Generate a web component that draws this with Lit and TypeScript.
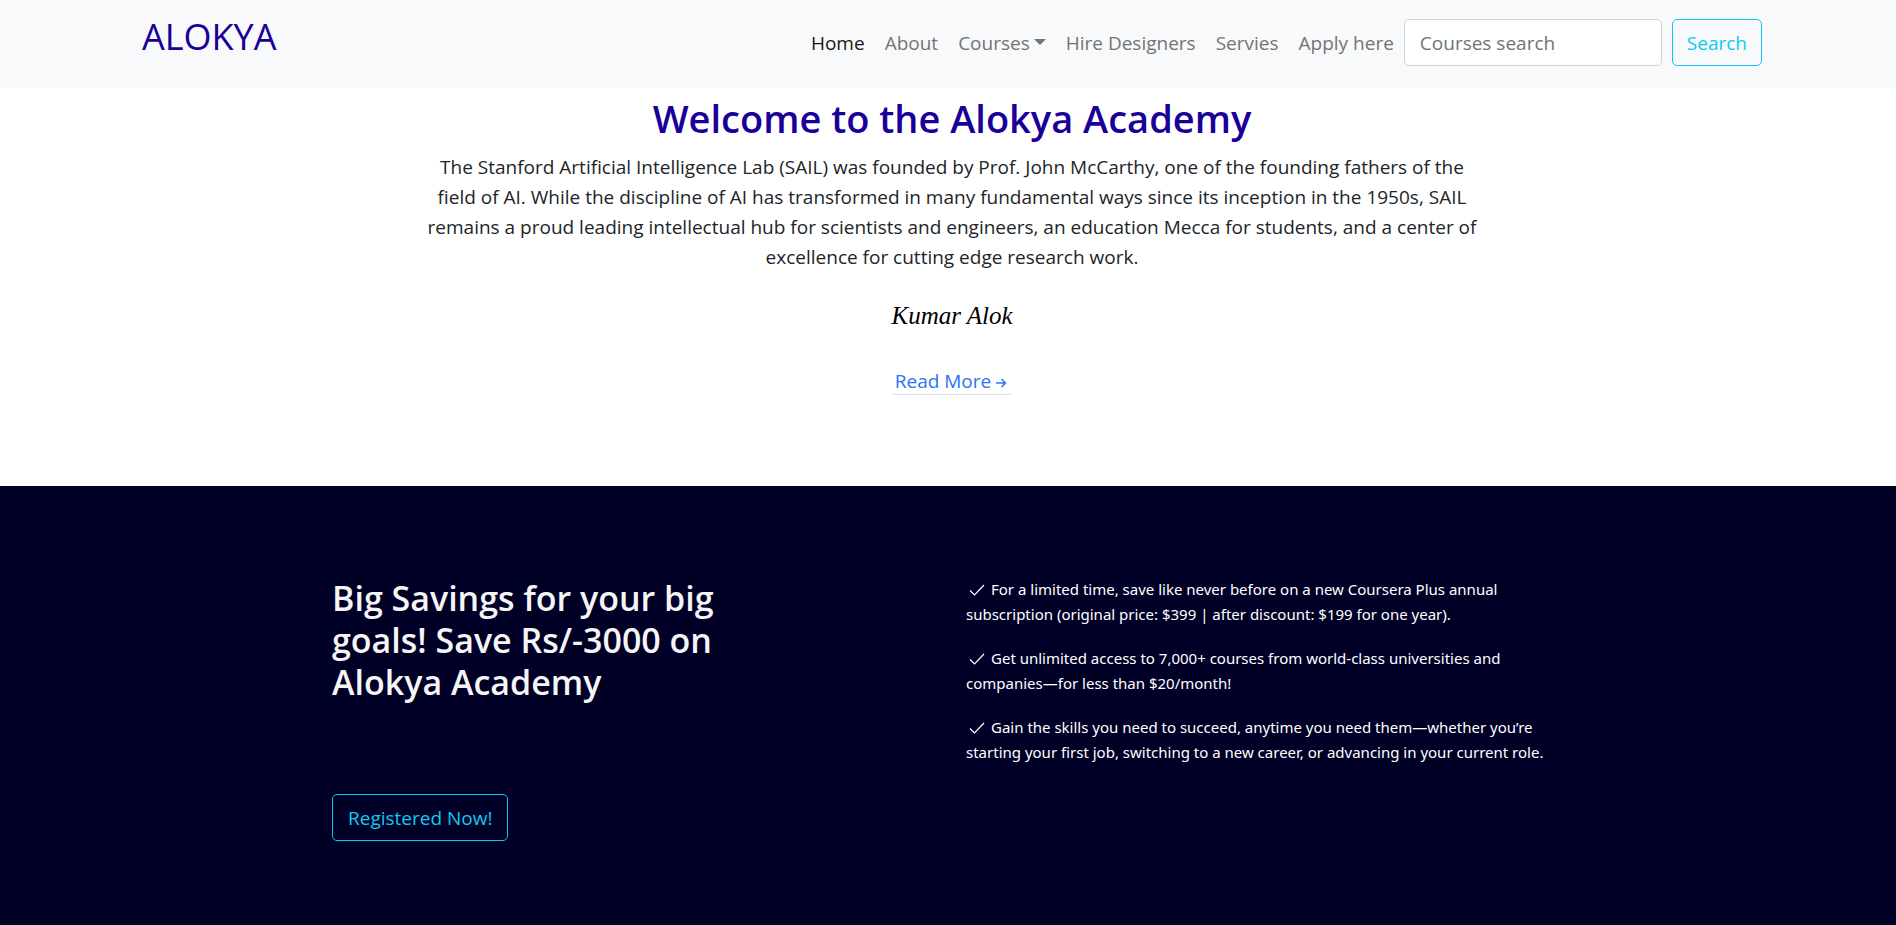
import { LitElement, html, css } from "lit";
import { customElement } from "lit/decorators.js";

const links = ["About", "Courses", "Hire Designers", "Servies", "Apply here"];
const perks = [
  "For a limited time, save like never before on a new Coursera Plus annual subscription (original price: $399 | after discount: $199 for one year).",
  "Get unlimited access to 7,000+ courses from world-class universities and companies—for less than $20/month!",
  "Gain the skills you need to succeed, anytime you need them—whether you’re starting your first job, switching to a new career, or advancing in your current role.",
];

@customElement("app-root")
export class AppRoot extends LitElement {
  static styles = css`
    :host {
      display: flex;
      flex-direction: column;
      min-height: 100vh;
      background: #fff;
      color: #212529;
      font: 400 19px/30px "Open Sans", "Noto Sans", sans-serif;
    }
    * { box-sizing: border-box; }
    a { text-decoration: none; }
    h1, h2, p { margin: 0; }
    .bar {
      display: flex;
      justify-content: space-between;
      align-items: flex-start;
      min-height: 88px;
      padding: 14px 134px 14px 142px;
      background: #f8f9fa;
    }
    .brand { color: #1a0099; font-size: 36px; line-height: 46px; font-weight: 500; }
    .menu { display: flex; align-items: center; padding-top: 5px; }
    .nav { display: flex; }
    .nav a { padding: 0 10px; color: #737475; white-space: nowrap; }
    .nav a.active { color: #17181a; }
    .caret {
      display: inline-block;
      margin-left: 4px;
      vertical-align: 5px;
      border: 6px solid transparent;
      border-top-color: currentColor;
      border-bottom: 0;
    }
    .search { display: flex; gap: 10px; }
    input, button { font: inherit; height: 47px; border-radius: 5px; }
    input {
      width: 258px;
      padding: 0 15px;
      border: 1px solid #ced4da;
      background: #fff;
      color: #212529;
    }
    input::placeholder { color: #6c757d; opacity: 1; }
    button {
      padding: 0 15px;
      border: 1px solid #0dcaf0;
      background: transparent;
      color: #0dcaf0;
      cursor: pointer;
      white-space: nowrap;
    }
    .search button { padding: 0 14px; }
    .intro {
      display: flex;
      flex-direction: column;
      align-items: center;
      padding: 8px 16px 91px 24px;
      text-align: center;
    }
    h1 { color: #1a0099; font-size: 38px; line-height: 44px; font-weight: 600; }
    .lead { max-width: 1060px; padding-top: 12px; }
    .sign {
      padding: 20px 0 28px;
      color: #000;
      font: italic 25px/48px "Liberation Serif", serif;
    }
    .more {
      display: flex;
      align-items: center;
      gap: 4px;
      padding: 0 4px 0 2px;
      border-bottom: 1px solid #dcdfee;
      color: #2a73f8;
      line-height: 26px;
    }
    .arrow { margin-top: 3px; }
    .offer {
      display: grid;
      grid-template-columns: 1fr 1fr;
      flex: 1;
      padding: 91px 324px 80px 332px;
      gap: 28px;
      background: #000026;
      color: #f5f5f5;
    }
    h2 { max-width: 400px; padding-bottom: 91px; font-size: 34px; line-height: 42px; font-weight: 600; }
    .perks {
      display: grid;
      gap: 19px;
      align-content: start;
      color: #fff;
      font-family: "Noto Sans", "Open Sans", sans-serif;
      font-size: 15px;
      line-height: 25px;
    }
    .check { vertical-align: -4px; margin: 0 5px 0 2px; }
  `;

  render() {
    return html`
      <header class="bar">
        <a class="brand" href="#">ALOKYA</a>
        <div class="menu">
          <nav class="nav">
            <a class="active" href="#">Home</a>
            ${links.map((l) => html`<a href="#">${l}${l === "Courses" ? html`<span class="caret"></span>` : ""}</a>`)}
          </nav>
          <form class="search" @submit=${(e: Event) => e.preventDefault()}>
            <input type="search" placeholder="Courses search" aria-label="Courses search" />
            <button type="submit">Search</button>
          </form>
        </div>
      </header>
      <section class="intro">
        <h1>Welcome to the Alokya Academy</h1>
        <p class="lead">
          The Stanford Artificial Intelligence Lab (SAIL) was founded by Prof. John McCarthy, one of the founding
          fathers of the field of AI. While the discipline of AI has transformed in many fundamental ways since its
          inception in the 1950s, SAIL remains a proud leading intellectual hub for scientists and engineers, an
          education Mecca for students, and a center of excellence for cutting edge research work.
        </p>
        <p class="sign">Kumar Alok</p>
        <a class="more" href="#">Read More
          <svg class="arrow" width="12" height="12" viewBox="0 0 12 12" fill="none" stroke="currentColor" stroke-width="1.5">
            <path d="M1 6h9.500M6.500 2l4 4-4 4" />
          </svg>
        </a>
      </section>
      <section class="offer">
        <div>
          <h2>Big Savings for your big goals! Save Rs/-3000 on Alokya Academy</h2>
          <button type="button">Registered Now!</button>
        </div>
        <div class="perks">
          ${perks.map(
            (p) => html`<p><svg class="check" width="18" height="18" viewBox="0 0 18 18" fill="none" stroke="currentColor" stroke-width="1.2"><path d="M2 9.500l4.500 4.500L16 4" /></svg>${p}</p>`
          )}
        </div>
      </section>
    `;
  }
}
